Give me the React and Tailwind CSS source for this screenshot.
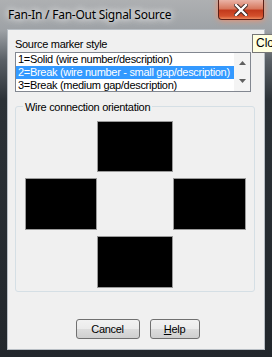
import React from "react";

function Rect({ className }) {
  return <div className={"bg-black border border-[#9a9a9a] " + className} />;
}

function ListItem({ text, selected }) {
  return (
    <div
      className={
        "h-[13px] leading-[13px] pl-[2px] whitespace-nowrap " +
        (selected ? "bg-[#3399ff] text-white" : "text-black")
      }
    >
      {text}
    </div>
  );
}

export default function App() {
  return (
    <div
      className="relative w-[272px] h-[357px] overflow-hidden bg-[linear-gradient(180deg,#aeb0b2_0px,#9ea2a6_30px,#5a6066_60px,#2b3136_100px,#22272c_357px)] font-['Liberation_Sans',Arial,sans-serif] text-[11px] tracking-[-0.3px]"
    >
      {/* title bar */}
      <div className="h-[29px] flex items-start">
        <div className="pl-[8px] pt-[7px] text-[12px] leading-[15px] tracking-[-0.25px] text-black font-['Noto_Sans',sans-serif] [text-shadow:0_0_6px_#fff,0_0_10px_#fff]">
          Fan-In / Fan-Out Signal Source
        </div>
        <div className="ml-auto mr-[8px] w-[46px] h-[20px] rounded-b-[4px] border border-t-0 border-[#5a2018] bg-[linear-gradient(180deg,#eab3a6_0%,#d7795f_45%,#c33a1c_55%,#d4502c_85%,#eb8a5e_100%)] flex items-center justify-center shadow-[0_0_6px_#ff8a60]">
          <svg width="14" height="12" viewBox="0 0 14 12">
            <path d="M2 1 L12 11 M12 1 L2 11" stroke="#3a2420" strokeWidth="4.2" strokeLinecap="square" />
            <path d="M2 1 L12 11 M12 1 L2 11" stroke="#ffffff" strokeWidth="2.4" strokeLinecap="square" />
          </svg>
        </div>
      </div>

      {/* client area */}
      <div className="mx-[7px] h-[321px] border border-[#b8bec4] bg-[#f0f0f0] flex flex-col">
        <div className="pl-[7px] pt-[7px] leading-[14px] text-black">Source marker style</div>
        <div className="ml-[7px] mt-[1px] w-[236px] h-[40px] border border-[#828790] bg-white flex">
          <div className="flex-1 overflow-hidden">
            <ListItem text="1=Solid (wire number/description)" />
            <ListItem text="2=Break (wire number - small gap/description)" selected />
            <ListItem text="3=Break (medium gap/description)" />
          </div>
          <div className="w-[16px] bg-[#f4f4f4] flex flex-col items-center justify-between py-[8px]">
            <svg width="7" height="4" viewBox="0 0 7 4">
              <path d="M0 4 L3.5 0 L7 4 Z" fill="#606060" />
            </svg>
            <svg width="7" height="4" viewBox="0 0 7 4">
              <path d="M0 0 L7 0 L3.5 4 Z" fill="#606060" />
            </svg>
          </div>
        </div>

        {/* group box */}
        <div className="relative ml-[7px] mt-[14px] w-[240px] h-[186px] border border-[#d5dfe5] rounded-[3px]">
          <div className="absolute left-[7px] top-[-7px] px-[2px] bg-[#f0f0f0] leading-[14px] text-black">
            Wire connection orientation
          </div>
          <div className="flex flex-col items-center pt-[14px]">
            <Rect className="w-[76px] h-[51px]" />
            <div className="flex items-center mt-[6px]">
              <Rect className="w-[72px] h-[52px]" />
              <div className="w-[76px]" />
              <Rect className="w-[73px] h-[52px]" />
            </div>
            <Rect className="w-[76px] h-[52px] mt-[6px]" />
          </div>
        </div>

        <div className="flex justify-center gap-[10px] mt-[27px] pl-[3px]">
          <button className="w-[64px] h-[20px] rounded-[3px] border border-[#707070] bg-[linear-gradient(180deg,#f2f2f2_0%,#ebebeb_50%,#dddddd_50%,#cfcfcf_100%)] text-black text-[11px] leading-[18px]">
            Cancel
          </button>
          <button className="w-[50px] h-[20px] rounded-[3px] border border-[#707070] bg-[linear-gradient(180deg,#f2f2f2_0%,#ebebeb_50%,#dddddd_50%,#cfcfcf_100%)] text-black text-[11px] leading-[18px]">
            <span className="underline">H</span>elp
          </button>
        </div>
      </div>

      {/* tooltip */}
      <div className="absolute left-[252px] top-[34px] h-[19px] pl-[3px] pr-[6px] border border-[#767676] bg-[#ffffe1] text-[12px] leading-[17px] tracking-normal text-black">
        Close
      </div>
    </div>
  );
}
